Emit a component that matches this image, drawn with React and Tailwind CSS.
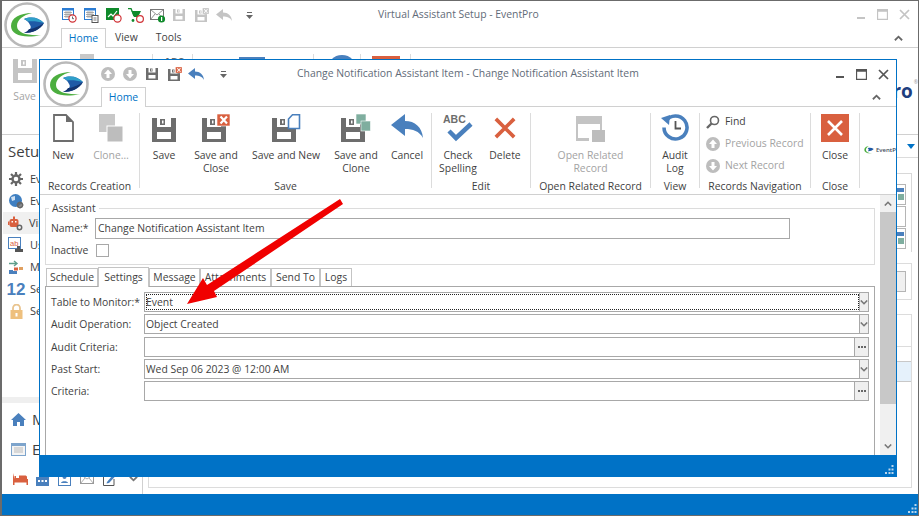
import { Fragment } from 'react';

// ---------- icons ----------
function FloppyShape({ color }) {
  return (
    <Fragment>
      <path fillRule="evenodd" fill={color} d="M0 0H24V24H0Z M5 0V9H19V0Z M5 14V21H19V14Z" />
      <path fillRule="evenodd" fill={color} d="M8 1H13V7H8Z M10 2.5V5.5H11.5V2.5Z" />
    </Fragment>
  );
}

function Floppy({ size = 24, color = '#6d6d6d' }) {
  return (
    <svg width={size} height={size} viewBox="0 0 24 24">
      <FloppyShape color={color} />
    </svg>
  );
}

function SaveClose({ size = 28, color = '#6d6d6d', box = '#d9603f' }) {
  return (
    <svg width={size} height={size} viewBox="0 0 28 28">
      <g transform="translate(0,4)"><FloppyShape color={color} /></g>
      <rect x="15" y="0" width="13" height="12" fill={box} stroke="#fff" strokeWidth="0.6" />
      <path d="M18.5 2.5L25 9.5M25 2.5L18.5 9.5" stroke="#fff" strokeWidth="2.2" />
    </svg>
  );
}

function SaveNew() {
  return (
    <svg width="29" height="28" viewBox="0 0 29 28">
      <g transform="translate(0,4)"><FloppyShape color="#6d6d6d" /></g>
      <path d="M16.5 5L20.5 0.8H27.5V14.5H16.5Z" fill="#fff" stroke="#4a80bd" strokeWidth="1.6" />
    </svg>
  );
}

function SaveClone() {
  return (
    <svg width="30" height="28" viewBox="0 0 30 28">
      <g transform="translate(0,4)"><FloppyShape color="#6d6d6d" /></g>
      <rect x="15" y="0" width="10" height="10" fill="#7fae9f" stroke="#fff" strokeWidth="0.6" />
      <rect x="20" y="7" width="9.5" height="10" fill="#7fae9f" stroke="#fff" strokeWidth="0.6" />
    </svg>
  );
}

function Undo({ color = '#4a80bd', width = 32, height = 24 }) {
  return (
    <svg width={width} height={height} viewBox="0 0 32 24">
      <path fill={color} d="M0 11L14 0V7C24 7 31 13 32 24C28 17 22 15 14 15V22Z" />
    </svg>
  );
}

function NewDoc() {
  return (
    <svg width="21" height="28" viewBox="0 0 21 28">
      <path d="M1 1H13L20 8V27H1Z" fill="#fff" stroke="#6d6d6d" strokeWidth="1.8" />
      <path d="M13 1V8H20Z" fill="#6d6d6d" />
    </svg>
  );
}

function CloneIcon() {
  return (
    <svg width="24" height="28" viewBox="0 0 24 28">
      <rect x="0" y="0" width="16" height="18" fill="#c8c8c8" />
      <rect x="8" y="12" width="16" height="16" fill="#bdbdbd" stroke="#fff" strokeWidth="1" />
    </svg>
  );
}

function Spell() {
  return (
    <svg width="32" height="28" viewBox="0 0 32 28">
      <text x="1" y="9" fontSize="10.5" fontWeight="700" fill="#6d6d6d" fontFamily="Liberation Sans, sans-serif">ABC</text>
      <path d="M7 17L14 24L29 10" fill="none" stroke="#4a80bd" strokeWidth="4.5" />
    </svg>
  );
}

function BigX() {
  return (
    <svg width="22" height="22" viewBox="0 0 24 24">
      <path d="M2 2L22 22M22 2L2 22" stroke="#d9603f" strokeWidth="4" />
    </svg>
  );
}

function OpenRelated() {
  return (
    <svg width="29" height="26" viewBox="0 0 29 26">
      <path fillRule="evenodd" fill="#c4c4c4" d="M0 0H26V15H24V8H2V22H13V25H0Z" />
      <rect x="16" y="14" width="13" height="12" fill="#bdbdbd" />
    </svg>
  );
}

function AuditLog() {
  return (
    <svg width="29" height="29" viewBox="0 0 29 29">
      <path d="M5 8A11.5 11.5 0 1 1 3 14.5" fill="none" stroke="#4a80bd" strokeWidth="3.6" />
      <path d="M0 5L9 2L8 12Z" fill="#4a80bd" />
      <path d="M14.5 8V15.5H20" fill="none" stroke="#555" strokeWidth="1.8" />
    </svg>
  );
}

function CloseBig() {
  return (
    <svg width="28" height="28" viewBox="0 0 28 28">
      <rect width="28" height="28" fill="#d9603f" />
      <path d="M7 7L21 21M21 7L7 21" stroke="#fff" strokeWidth="2.6" />
    </svg>
  );
}

function Logo({ size = 46 }) {
  return (
    <svg width={size} height={size} viewBox="0 0 46 46">
      <circle cx="23" cy="23" r="21.5" fill="#fff" stroke="#b9b9b9" strokeWidth="2.6" />
      <path d="M28 11C16 11 7 16 7 24C7 33 20 37 37 33C24 34 13 31 13 24C13 18 19 13 28 11Z" fill="#4cae3f" />
      <path d="M20 17C28 14 35 16 40 21C36 28 28 31 20 31C26 28 28 26 26 23C25 20 22 18 20 17Z" fill="#1f5aa6" />
      <path d="M20 31C28 31 36 28 40 21C34 25 28 27 25 27C24 29 22 30 20 31Z" fill="#14346f" />
      <path d="M20 17C28 14 35 16 40 21C33 19 28 19 24 19.5C23 18.5 21 17.5 20 17Z" fill="#2f9fc9" />
    </svg>
  );
}

function CircleArrow({ up = true, size = 14 }) {
  return (
    <svg width={size} height={size} viewBox="0 0 14 14">
      <circle cx="7" cy="7" r="7" fill="#bdbdbd" />
      <path d={up ? 'M7 2.5L11 7H8.5V11H5.5V7H3Z' : 'M7 11.5L11 7H8.5V3H5.5V7H3Z'} fill="#fff" />
    </svg>
  );
}

function Chev({ up = false, color = '#777', w = 10, h = 6, sw = 2 }) {
  return (
    <svg width={w} height={h} viewBox="0 0 10 6">
      <path d={up ? 'M1 5.5L5 1.5L9 5.5' : 'M1 0.5L5 4.5L9 0.5'} fill="none" stroke={color} strokeWidth={sw} />
    </svg>
  );
}

function QatDrop() {
  return (
    <svg width="7" height="7" viewBox="0 0 7 7">
      <rect x="1" y="0" width="5" height="1" fill="#666" />
      <path d="M0 3H7L3.5 7Z" fill="#666" />
    </svg>
  );
}

function Grip() {
  return (
    <svg width="9" height="9" viewBox="0 0 9 9" fill="#bcd6ec">
      <rect x="6.5" y="0" width="2" height="2" />
      <rect x="3.5" y="3.5" width="2" height="2" />
      <rect x="6.5" y="3.5" width="2" height="2" />
      <rect x="0" y="7" width="2" height="2" />
      <rect x="3.5" y="7" width="2" height="2" />
      <rect x="6.5" y="7" width="2" height="2" />
    </svg>
  );
}

function WinButtons({ color, gap }) {
  return (
    <div className={`flex items-center ${gap}`}>
      <svg width="10" height="10" viewBox="0 0 10 10"><rect x="1" y="7" width="8" height="2" fill={color} /></svg>
      <svg width="11" height="11" viewBox="0 0 11 11"><path d="M0.5 0.5H10.5V10.5H0.5Z M0.5 2H10.5" fill="none" stroke={color} strokeWidth="1.3" /></svg>
      <svg width="11" height="11" viewBox="0 0 11 11"><path d="M1 1L10 10M10 1L1 10" stroke={color} strokeWidth="1.7" /></svg>
    </div>
  );
}

// small quick access icons of the main window
function QatCal({ kind }) {
  return (
    <svg width="15" height="15" viewBox="0 0 15 15">
      <rect x="0.5" y="0.5" width="11" height="11" fill="#fff" stroke="#2b7cd3" />
      <rect x="0" y="0" width="12" height="2.5" fill="#2b7cd3" />
      <path d="M2 4.5H10M2 6.5H10M2 8.5H10M4 3V10M6 3V10M8 3V10" stroke="#9a9a9a" strokeWidth="0.8" />
      {kind === 'clock' ? (
        <Fragment>
          <circle cx="10.5" cy="10.5" r="3.6" fill="#fff" stroke="#d13438" strokeWidth="1.2" />
          <path d="M10.5 8.5V10.7H12" stroke="#444" strokeWidth="0.8" fill="none" />
        </Fragment>
      ) : (
        <Fragment>
          <rect x="8" y="7.5" width="6" height="7" fill="#fff" stroke="#555" />
          <path d="M9.5 10H12.5M9.5 12H12.5" stroke="#555" strokeWidth="0.8" />
        </Fragment>
      )}
    </svg>
  );
}

function QatChart() {
  return (
    <svg width="16" height="15" viewBox="0 0 16 15">
      <rect x="0" y="0" width="13" height="12" fill="#0f8a2b" />
      <path d="M2 9L5 6L7 8L11 3" stroke="#fff" strokeWidth="1.2" fill="none" />
      <circle cx="11.5" cy="10.5" r="3.6" fill="#fff" stroke="#d13438" strokeWidth="1.2" />
    </svg>
  );
}

function QatCart() {
  return (
    <svg width="16" height="15" viewBox="0 0 16 15">
      <path d="M0 0.5H3L6 8" stroke="#0f8a2b" strokeWidth="1.3" fill="none" />
      <path d="M3.5 3H13L10 9H6Z" fill="#0f8a2b" />
      <circle cx="5" cy="12.5" r="1.4" fill="#0f8a2b" />
      <circle cx="12" cy="11" r="3.4" fill="#fff" stroke="#d13438" strokeWidth="1.2" />
    </svg>
  );
}

function QatMail() {
  return (
    <svg width="16" height="15" viewBox="0 0 16 15">
      <rect x="0.5" y="1.5" width="13" height="10" fill="#fff" stroke="#777" />
      <path d="M0.5 1.5L7 7L13.5 1.5M0.5 11.5L5 6M13.5 11.5L9 6" stroke="#777" fill="none" strokeWidth="0.8" />
      <circle cx="11.5" cy="11" r="3.6" fill="#0f8a2b" />
      <rect x="11" y="9" width="1.2" height="4" fill="#fff" />
    </svg>
  );
}

// sidebar icons
function Gear({ size = 14, color = '#666' }) {
  return (
    <svg width={size} height={size} viewBox="0 0 14 14">
      <circle cx="7" cy="7" r="3.5" fill="none" stroke={color} strokeWidth="2.4" />
      <path d="M7 0V3M7 11V14M0 7H3M11 7H14M2 2L4 4M10 10L12 12M12 2L10 4M4 10L2 12" stroke={color} strokeWidth="2.2" />
    </svg>
  );
}

function NavIcon({ kind }) {
  if (kind === 'gear') return <Gear />;
  if (kind === 'globe') {
    return (
      <svg width="15" height="15" viewBox="0 0 15 15">
        <circle cx="6.5" cy="6.5" r="6.5" fill="#3f7fc1" />
        <path d="M2 3L6 2L6 6L3 7Z" fill="#cfe0f1" />
        <circle cx="11" cy="11" r="2.4" fill="none" stroke="#666" strokeWidth="1.6" />
        <path d="M11 7.5V14.5M7.5 11H14.5" stroke="#666" strokeWidth="1" />
      </svg>
    );
  }
  if (kind === 'robot') {
    return (
      <svg width="15" height="15" viewBox="0 0 15 15">
        <rect x="1.5" y="3" width="9" height="8" rx="2" fill="#d9603f" />
        <rect x="0" y="5.5" width="1.5" height="3.5" fill="#d9603f" />
        <rect x="5" y="0.5" width="2" height="2.5" fill="#d9603f" />
        <rect x="3.5" y="5" width="1.5" height="1.5" fill="#fff" />
        <rect x="7" y="5" width="1.5" height="1.5" fill="#fff" />
        <circle cx="11.5" cy="11.5" r="2.2" fill="none" stroke="#666" strokeWidth="1.5" />
      </svg>
    );
  }
  if (kind === 'ab') {
    return (
      <svg width="16" height="16" viewBox="0 0 16 16">
        <rect x="0.5" y="0.5" width="12" height="11" fill="#fff" stroke="#4a80bd" />
        <text x="2" y="8.5" fontSize="7.5" fill="#d9603f" fontFamily="Liberation Sans, sans-serif">ab</text>
        <path d="M9 9H12V12H15V15H7V12H9Z" fill="#555" />
      </svg>
    );
  }
  if (kind === 'move') {
    return (
      <svg width="15" height="14" viewBox="0 0 15 14">
        <path d="M0 3.5H7M5 1L8 3.5L5 6" stroke="#5f9e8c" strokeWidth="1.4" fill="none" />
        <rect x="0" y="10" width="4" height="4" fill="#4a80bd" />
        <rect x="5" y="7.5" width="4" height="3" fill="#d9603f" />
        <rect x="4" y="11" width="4" height="3" fill="#4a80bd" />
        <rect x="10" y="7" width="4" height="3" fill="#e0a060" />
      </svg>
    );
  }
  if (kind === 'num') {
    return <span className="text-[17px] leading-none font-bold text-[#4a80bd] font-['Liberation_Sans',sans-serif]">12</span>;
  }
  return (
    <svg width="13" height="15" viewBox="0 0 13 15">
      <path d="M3 6V4A3.5 3.5 0 0 1 10 4V6" fill="none" stroke="#e9c48f" strokeWidth="1.8" />
      <rect x="0.5" y="6" width="12" height="9" fill="#eec07e" />
      <rect x="5.5" y="9" width="2" height="3.5" fill="#fff" />
    </svg>
  );
}

// ---------- ribbon pieces ----------
function RibbonBtn({ w, label, icon, disabled = false, iconClass = '' }) {
  return (
    <div className={`flex flex-col items-center ${w}`}>
      <div className={`flex h-[29px] items-end justify-center ${iconClass}`}>{icon}</div>
      <div className={`mt-[7px] whitespace-pre text-center leading-[13px] ${disabled ? 'text-[#a3a3a3]' : 'text-[#3f3f3f]'}`}>{label}</div>
    </div>
  );
}

function RibbonGroup({ w, label, children, last = false }) {
  return (
    <div className={`h-[75px] shrink-0 ${w} ${last ? '' : 'border-r border-[#dcdcdc]'}`}>
      <div className="flex h-[67px]">{children}</div>
      <div className="whitespace-nowrap text-center leading-[13px] text-[#3f3f3f]">{label}</div>
    </div>
  );
}

function NavRow({ icon, label, disabled = false }) {
  return (
    <div className="flex h-[22px] items-center gap-[5px] whitespace-nowrap">
      <div className="flex w-[14px] justify-center">{icon}</div>
      <span className={disabled ? 'text-[#a3a3a3]' : 'text-[#3f3f3f]'}>{label}</span>
    </div>
  );
}

function Tab({ label, active = false, w }) {
  if (active) {
    return (
      <div className={`relative z-10 -mb-px flex h-[20px] items-center justify-center border border-b-0 border-[#c4c4c4] bg-white text-[#3f3f3f] ${w}`}>
        {label}
      </div>
    );
  }
  return (
    <div className={`flex h-[18px] items-center justify-center border border-b-0 border-[#c4c4c4] pt-[1px] text-[#3f3f3f] ${w}`}>
      {label}
    </div>
  );
}

function Field({ label, value, kind, focus = false, mt }) {
  return (
    <div className={`flex ${mt}`}>
      <div className="flex h-[20px] w-[93px] items-center whitespace-nowrap pt-[1px] text-[#3f3f3f]">{label}</div>
      <div className="relative flex h-[20px] w-[725px] items-center border border-[#a8a8a8] pl-[1px] text-[#3f3f3f]">
        <span className="flex-1 pt-[1px]">{value}</span>
        {focus && <div className="absolute left-[1px] right-[9px] top-[1px] bottom-[1px] border border-dotted border-[#222]" />}
        {kind === 'combo' ? (
          <div className="flex h-full w-[9px] items-center justify-center border-l border-[#a8a8a8] bg-[#efefef]">
            <Chev w={8} h={5} />
          </div>
        ) : (
          <div className="flex h-full w-[14px] items-center justify-center gap-[1px] border-l border-[#a8a8a8] bg-[#efefef]">
            <span className="h-[2px] w-[2px] bg-[#666]" />
            <span className="h-[2px] w-[2px] bg-[#666]" />
            <span className="h-[2px] w-[2px] bg-[#666]" />
          </div>
        )}
      </div>
    </div>
  );
}

// ---------- the two windows ----------
function MainWindow() {
  return (
    <div className="flex h-full flex-col border border-[#6b6b6b] border-b-0 border-l-2 bg-white">
      {/* title and tabs */}
      <div className="flex h-[47px] shrink-0 border-b border-[#d0d0d0]">
        <div className="w-[59px] shrink-0 pl-[2px] pt-[1px]"><Logo /></div>
        <div className="flex flex-1 flex-col">
          <div className="flex h-[27px] items-center">
            <div className="flex w-[317px] items-center pl-[1px] pt-[1px]">
              <div className="w-[22px]"><QatCal kind="clock" /></div>
              <div className="w-[22px]"><QatCal kind="doc" /></div>
              <div className="w-[22px]"><QatChart /></div>
              <div className="w-[22px]"><QatCart /></div>
              <div className="w-[23px]"><QatMail /></div>
              <div className="w-[22px]"><Floppy size={12} color="#c4c4c4" /></div>
              <div className="w-[21px]"><SaveClose size={14} color="#c4c4c4" box="#c4c4c4" /></div>
              <div className="w-[30px]"><Undo color="#c4c4c4" width={16} height={12} /></div>
              <QatDrop />
            </div>
            <span className="text-[#5f6b78]">Virtual Assistant Setup - EventPro</span>
            <div className="ml-auto pr-[8px]"><WinButtons color="#c4c4c4" gap="gap-[11px]" /></div>
          </div>
          <div className="flex h-[19px] items-stretch">
            <div className="-mb-px flex h-[20px] w-[45px] items-center justify-center border border-b-0 border-[#d0d0d0] bg-white text-[#0072c6]">Home</div>
            <div className="ml-[9px] flex items-center text-[#3f3f3f]">View</div>
            <div className="ml-[18px] flex items-center text-[#3f3f3f]">Tools</div>
            <div className="ml-auto flex items-center pr-[15px]"><Chev up w={9} h={6} color="#666" /></div>
          </div>
        </div>
      </div>
      {/* ribbon */}
      <div className="flex h-[87px] shrink-0 border-b border-[#d0d0d0] pt-[6px]">
        <div className="flex w-[45px] flex-col items-center pt-[5px]">
          <Floppy color="#c4c4c4" />
          <span className="mt-[6px] text-[#a3a3a3]">Save</span>
        </div>
        <div className="ml-[33px] h-[12px] w-[14px] bg-[#c8c8c8]" />
        <div className="ml-[58px] h-[70px] w-px bg-[#dcdcdc]" />
        <div className="ml-[11px] mt-[3px] text-[10px] font-bold leading-none text-[#6d6d6d]">ABC</div>
        <div className="ml-[8px] h-[70px] w-px bg-[#dcdcdc]" />
        <div className="ml-[46px] mt-[3px] h-[8px] w-[26px] bg-[#4a80bd]" />
        <div className="ml-[48px] h-[70px] w-px bg-[#dcdcdc]" />
        <div className="ml-[13px] mt-[1px] h-[30px] w-[30px] rounded-full bg-[#4a80bd]" />
        <div className="ml-[3px] h-[70px] w-px bg-[#dcdcdc]" />
        <div className="ml-[11px] mt-[2px] h-[28px] w-[28px] bg-[#d9603f]" />
        <div className="ml-[10px] h-[70px] w-px bg-[#dcdcdc]" />
        <div className="ml-auto mr-0 mt-[28px] flex h-[22px] items-start text-[19px] font-bold leading-[18px] text-[#1f3f7f]">
          EventPro<sup className="ml-[1px] mt-[2px] text-[5px] font-normal text-[#999]">®</sup>
        </div>
      </div>
      {/* body */}
      <div className="flex min-h-0 flex-1">
        <div className="flex w-[141px] shrink-0 flex-col border-r border-[#d0d0d0]">
          <div className="pl-[6px] pt-[6px] text-[15px] leading-[20px] text-[#3f3f3f]">Setup</div>
          <div className="mt-[7px] flex flex-1 flex-col pl-[1px]">
            {[
              ['gear', 'Event Settings'],
              ['globe', 'Event Types'],
              ['robot', 'Virtual Assistant Setup'],
              ['ab', 'User Defined'],
              ['move', 'Module Setup'],
              ['num', 'Serial Numbers'],
              ['lock', 'Security'],
            ].map(([kind, text]) => (
              <div key={text} className={`flex h-[22px] items-center gap-[6px] pl-[5px] whitespace-nowrap text-[11px] text-[#3f3f3f] ${kind === 'robot' ? 'bg-[#f0f0f0]' : ''}`}>
                <div className="flex w-[16px] justify-center"><NavIcon kind={kind} /></div>
                {text}
              </div>
            ))}
          </div>
          <div className="h-[6px] bg-[#efefef]" />
          <div className="flex h-[30px] items-center gap-[6px] pl-[9px] pt-[3px] text-[15px] text-[#3f3f3f]">
            <svg width="15" height="13" viewBox="0 0 15 13"><path fill="#4a80bd" d="M7.5 0L15 7H13V13H9V9H6V13H2V7H0Z" /></svg>
            My Tasks
          </div>
          <div className="flex h-[30px] items-center gap-[6px] pl-[9px] pt-[2px] text-[15px] text-[#3f3f3f]">
            <svg width="15" height="13" viewBox="0 0 15 13">
              <rect x="0.5" y="0.5" width="14" height="12" fill="#f4f4f4" stroke="#7da4cc" />
              <rect x="1" y="1" width="13" height="2" fill="#7da4cc" />
              <path d="M3 5H12M3 7H12M3 9H12" stroke="#bbb" strokeWidth="1" />
            </svg>
            Events
          </div>
          <div className="flex h-[31px] items-center pl-[11px] pt-[1px]">
            <svg width="15" height="12" viewBox="0 0 15 12"><path fill="#d9603f" d="M0 0H1.5V6H14V4C14 3 13 2.5 12 2.5H6V5H3V3H1.5V6M0 0V12H1.5V9.5H13.5V12H15V6H1.5V0Z" /></svg>
            <div className="ml-[8px]">
              <svg width="13" height="14" viewBox="0 0 13 14"><path fill="#4a80bd" d="M0 5H13V14H0Z M4 2H6V5H4Z" /><path fill="#fff" d="M2 8H4V10H2Z M5.5 8H7.5V10H5.5Z M9 8H11V10H9Z" /></svg>
            </div>
            <div className="ml-[9px]">
              <svg width="13" height="14" viewBox="0 0 13 14">
                <rect x="0.5" y="0.5" width="12" height="13" fill="#fff" stroke="#4a80bd" />
                <circle cx="6.5" cy="5" r="2" fill="#4a80bd" />
                <path d="M3 11C3 8.5 10 8.5 10 11Z" fill="#4a80bd" />
              </svg>
            </div>
            <div className="ml-[9px]">
              <svg width="14" height="10" viewBox="0 0 14 10">
                <rect x="0.5" y="0.5" width="13" height="9" fill="#fff" stroke="#999" />
                <path d="M0.5 0.5L7 5L13.5 0.5M0.5 9.5L5 4M13.5 9.5L9 4" stroke="#999" fill="none" strokeWidth="0.8" />
              </svg>
            </div>
            <div className="ml-[9px]">
              <svg width="14" height="14" viewBox="0 0 14 14">
                <path d="M9 3H0.5V13.5H11V7" fill="#fff" stroke="#555" />
                <path d="M4 10L11 1.5L13 3.5L6 11L3.5 11.5Z" fill="#4a80bd" />
              </svg>
            </div>
            <div className="ml-[12px]"><Chev w={9} h={6} color="#777" /></div>
          </div>
        </div>
        <div className="flex min-w-0 flex-1 flex-col">
          <div className="flex h-[23px] shrink-0 items-center justify-end border-b border-[#dcdcdc] pr-[3px]">
            <svg width="8" height="5" viewBox="0 0 8 5"><path d="M0 0H8L4 5Z" fill="#0072c6" /></svg>
          </div>
          <div className="ml-[5px] mr-[6px] mt-[15px] flex h-[79px] shrink-0 flex-col items-end gap-[1px] border-r border-t border-[#d8d8d8] pr-[5px] pt-[10px]">
            {[0, 1, 2].map((i) => (
              <div key={i} className="flex h-[21px] w-[30px] items-center justify-end border border-[#b5b5b5] bg-white pr-[1px]">
                {i !== 1 && (
                  <svg width="8" height="13" viewBox="0 0 8 13">
                    <rect x="0" y="0" width="8" height="4" fill="#4a80bd" />
                    <rect x="2" y="6" width="6" height="6" fill="#7fae9f" />
                  </svg>
                )}
              </div>
            ))}
          </div>
          <div className="ml-[5px] mr-[6px] mt-[11px] flex h-[37px] shrink-0 items-center justify-end border border-[#dcdcdc] pr-[5px]">
            <div className="h-[21px] w-[30px] border border-[#b5b5b5] bg-[#f0f0f0]" />
          </div>
          <div className="ml-[5px] mr-[6px] mt-[14px] flex h-[174px] shrink-0 flex-col border border-[#dcdcdc]">
            <div className="h-[32px] border-b border-[#dcdcdc]" />
            <div className="h-[14px]" />
            <div className="h-[21px] border-y border-[#c8c8c8] bg-[#e5f1fb]" />
          </div>
        </div>
      </div>
      {/* status */}
      <div className="flex h-[21px] shrink-0 items-end justify-end bg-[#0072c6] pb-[2px] pr-[1px]">
        <Grip />
      </div>
      <div className="h-px shrink-0 bg-[#6b6b6b]" />
    </div>
  );
}

function DialogWindow() {
  return (
    <div className="absolute left-[39px] top-[59px] flex h-[418px] w-[858px] flex-col border border-b-0 border-[#0072c6] bg-white">
      {/* title and tab */}
      <div className="flex h-[47px] shrink-0 border-b border-[#d0d0d0]">
        <div className="w-[61px] shrink-0 pl-[3px] pt-[1px]"><Logo /></div>
        <div className="flex flex-1 flex-col">
          <div className="flex h-[27px] items-center pt-[1px]">
            <div className="flex w-[196px] items-center">
              <div className="w-[22px]"><CircleArrow /></div>
              <div className="w-[23px]"><CircleArrow up={false} /></div>
              <div className="w-[22px]"><Floppy size={12} color="#6d6d6d" /></div>
              <div className="w-[20px]"><SaveClose size={14} /></div>
              <div className="w-[32px]"><Undo width={16} height={12} /></div>
              <QatDrop />
            </div>
            <span className="text-[#5f6b78]">Change Notification Assistant Item - Change Notification Assistant Item</span>
            <div className="ml-auto pr-[7px]"><WinButtons color="#555" gap="gap-[11px]" /></div>
          </div>
          <div className="flex h-[19px] items-stretch">
            <div className="-mb-px flex h-[20px] w-[45px] items-center justify-center border border-b-0 border-[#d0d0d0] bg-white text-[#0072c6]">Home</div>
            <div className="ml-auto flex items-center pr-[15px]"><Chev up w={9} h={6} color="#666" /></div>
          </div>
        </div>
      </div>
      {/* ribbon */}
      <div className="flex h-[88px] shrink-0 border-b border-[#d0d0d0] pt-[6px]">
        <RibbonGroup w="w-[100px]" label="Records Creation">
          <RibbonBtn w="w-[46px]" label="New" icon={<NewDoc />} />
          <RibbonBtn w="w-[50px]" label="Clone…" disabled icon={<CloneIcon />} />
        </RibbonGroup>
        <RibbonGroup w="w-[292px]" label="Save">
          <RibbonBtn w="w-[48px]" label="Save" icon={<Floppy />} />
          <RibbonBtn w="w-[56px]" label={'Save and\nClose'} icon={<SaveClose />} />
          <RibbonBtn w="w-[84px]" label="Save and New" icon={<SaveNew />} />
          <RibbonBtn w="w-[56px]" label={'Save and\nClone'} icon={<SaveClone />} />
          <RibbonBtn w="w-[46px]" label="Cancel" icon={<Undo />} iconClass="pb-[4px]" />
        </RibbonGroup>
        <RibbonGroup w="w-[99px]" label="Edit">
          <RibbonBtn w="w-[52px]" label={'Check\nSpelling'} icon={<Spell />} />
          <RibbonBtn w="w-[42px]" label="Delete" icon={<BigX />} iconClass="pb-[3px]" />
        </RibbonGroup>
        <RibbonGroup w="w-[120px]" label="Open Related Record">
          <RibbonBtn w="w-full" label={'Open Related\nRecord'} disabled icon={<OpenRelated />} />
        </RibbonGroup>
        <RibbonGroup w="w-[49px]" label="View">
          <RibbonBtn w="w-full" label={'Audit\nLog'} icon={<AuditLog />} />
        </RibbonGroup>
        <RibbonGroup w="w-[111px]" label="Records Navigation">
          <div className="-mt-[2px] flex flex-col pl-[6px]">
            <NavRow
              label="Find"
              icon={
                <svg width="14" height="14" viewBox="0 0 14 14">
                  <circle cx="8.5" cy="5.5" r="4" fill="none" stroke="#666" strokeWidth="1.6" />
                  <path d="M5.5 8.5L1 13" stroke="#666" strokeWidth="2.4" />
                </svg>
              }
            />
            <NavRow label="Previous Record" disabled icon={<CircleArrow />} />
            <NavRow label="Next Record" disabled icon={<CircleArrow up={false} />} />
          </div>
        </RibbonGroup>
        <RibbonGroup w="w-[49px]" label="Close">
          <RibbonBtn w="w-full" label="Close" icon={<CloseBig />} />
        </RibbonGroup>
        <div className="flex h-[75px] flex-1 items-center overflow-hidden pl-[2px]">
          <svg width="13" height="10" viewBox="0 0 46 36" className="shrink-0">
            <path d="M24 1C13 1 7 8 8 15C9 23 20 28 36 26C24 26 15 21 14 15C13 9 17 4 24 1Z" fill="#4cae3f" />
            <path d="M20 8C28 5 35 7 42 11C35 17 28 20 20 19C25 16 25 11 20 8Z" fill="#1f5aa6" />
          </svg>
          <span className="ml-[1px] whitespace-nowrap text-[6px] font-semibold text-[#3f4a5a]">EventPro</span>
        </div>
      </div>
      {/* form */}
      <div className="flex min-h-0 flex-1">
        <div className="flex min-w-0 flex-1 flex-col pl-[5px]">
          <div className="relative mt-[13px] h-[57px] w-[830px] shrink-0 border border-[#dcdcdc] pl-[5px]">
            <div className="absolute -top-[7px] left-[3px] bg-white px-[3px] leading-[13px] text-[#3f3f3f]">Assistant</div>
            <div className="mt-[9px] flex h-[21px] items-center text-[#3f3f3f]">
              <div className="w-[44px]">Name:*</div>
              <div className="flex h-[21px] w-[695px] items-center border border-[#a8a8a8] pl-[2px]">Change Notification Assistant Item</div>
            </div>
            <div className="mt-[5px] flex h-[13px] items-center text-[#3f3f3f]">
              <div className="w-[45px]">Inactive</div>
              <div className="h-[13px] w-[13px] border border-[#a8a8a8]" />
            </div>
          </div>
          <div className="mt-[2px] flex h-[19px] shrink-0 items-end pl-[1px]">
            <Tab label="Schedule" w="w-[52px]" />
            <Tab label="Settings" active w="w-[51px]" />
            <Tab label="Message" w="w-[51px]" />
            <Tab label="Attachments" w="w-[71px]" />
            <Tab label="Send To" w="w-[49px]" />
            <Tab label="Logs" w="w-[32px]" />
          </div>
          <div className="w-[830px] flex-1 border-x border-t border-[#a8a8a8] pl-[5px] pt-[5px]">
            <Field label="Table to Monitor:*" value="Event" kind="combo" focus />
            <Field label="Audit Operation:" value="Object Created" kind="combo" mt="mt-[2px]" />
            <Field label="Audit Criteria:" value="" kind="ellipsis" mt="mt-[3px]" />
            <Field label="Past Start:" value="Wed Sep 06 2023 @ 12:00 AM" kind="combo" mt="mt-[2px]" />
            <Field label="Criteria:" value="" kind="ellipsis" mt="mt-[2px]" />
          </div>
        </div>
        <div className="flex w-[16px] shrink-0 flex-col bg-[#f0f0f0]">
          <div className="flex h-[17px] items-center justify-center"><Chev up w={8} h={5} color="#777" /></div>
          <div className="h-[192px] bg-[#c8c8c8]" />
          <div className="flex flex-1 items-end justify-center pb-[6px]"><Chev w={8} h={5} color="#777" /></div>
        </div>
      </div>
      {/* status */}
      <div className="flex h-[22px] shrink-0 items-end justify-end bg-[#0072c6] pb-[3px] pr-[2px]">
        <Grip />
      </div>
    </div>
  );
}

export default function App() {
  return (
    <div className="relative h-[516px] w-[919px] overflow-hidden bg-white font-['Open_Sans','Noto_Sans',sans-serif] text-[10.4px]">
      <MainWindow />
      <DialogWindow />
      {/* red annotation arrow */}
      <svg className="absolute left-0 top-0" width="919" height="516" viewBox="0 0 919 516">
        <polygon points="340,199 343,204 214,291 217,297 187,304 203,278 207,285" fill="#f00000" />
      </svg>
    </div>
  );
}
